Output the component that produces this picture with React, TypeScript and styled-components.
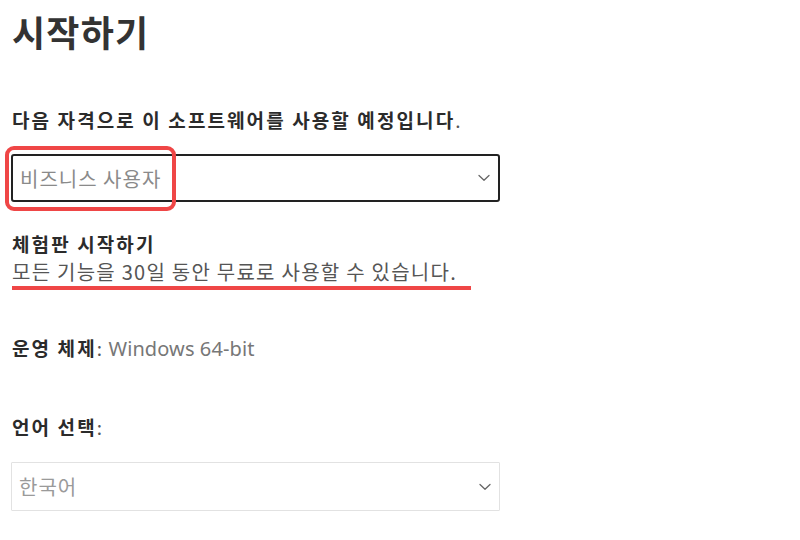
import React from "react";
import styled, { createGlobalStyle } from "styled-components";

const Global = createGlobalStyle`
  html, body { margin: 0; padding: 0; background: #fff; }
  body { font-family: "Noto Sans", "Noto Sans CJK KR", sans-serif; }
`;

const Page = styled.div`
  padding: 11px 0 0 11px;
  width: 489px;
  display: flex;
  flex-direction: column;
`;

const Title = styled.h1`
  margin: 0 0 0 1px;
  font-family: "Noto Sans CJK KR", sans-serif;
  font-size: 36px;
  letter-spacing: 1.2px;
  line-height: 40px;
  font-weight: 700;
  color: #333;
`;

const Label = styled.div<{ $mt: number }>`
  margin-top: ${(p) => p.$mt}px;
  margin-left: 1px;
  font-family: "Noto Sans CJK KR", sans-serif;
  font-size: 19px;
  letter-spacing: 2.1px;
  line-height: 26px;
  font-weight: 700;
  color: #2b2b2b;
`;

const Punct = styled.span`
  font-weight: 400;
  color: #555;
  letter-spacing: 0;
`;

const Value = styled.span`
  font-family: "Noto Sans", "Noto Sans CJK KR", sans-serif;
  font-weight: 400;
  font-size: 20px;
  color: #777;
  letter-spacing: 0.1px;
`;

const SelectWrap = styled.div<{ $mt: number }>`
  position: relative;
  margin-top: ${(p) => p.$mt}px;
`;

const SelectBox = styled.div<{ $strong?: boolean }>`
  box-sizing: border-box;
  height: ${(p) => (p.$strong ? 48 : 49)}px;
  width: 489px;
  display: flex;
  align-items: center;
  justify-content: space-between;
  padding: 0 7px 0 7px;
  border: ${(p) => (p.$strong ? "2px solid #222" : "1px solid #e2e2e2")};
  border-radius: ${(p) => (p.$strong ? 3 : 1)}px;
  background: #fff;
`;

const SelectText = styled.span<{ $light?: boolean }>`
  font-family: "Noto Sans CJK KR", sans-serif;
  font-size: 20px;
  color: ${(p) => (p.$light ? "#9a9a9a" : "#8a8a8a")};
  letter-spacing: 1px;
`;

const Highlight = styled.div`
  position: absolute;
  left: -6px;
  top: -8px;
  width: 171px;
  height: 65px;
  box-sizing: border-box;
  border: 4px solid #ef4646;
  border-radius: 9px;
  pointer-events: none;
`;

const Desc = styled.div`
  margin-left: 1px;
  margin-top: 1px;
  line-height: 28px;
`;

const Underlined = styled.span`
  display: inline-block;
  font-family: "Noto Sans CJK KR", sans-serif;
  font-size: 20px;
  letter-spacing: 1.25px;
  color: #555;
  padding-right: 14px;
  border-bottom: 4px solid #ef4646;
  line-height: 28px;
`;

const Chevron = () => (
  <svg width="14" height="8" viewBox="0 0 14 8" fill="none">
    <path d="M2 1.5 L7 6.2 L12 1.5" stroke="#666" strokeWidth="1.3" strokeLinecap="round" strokeLinejoin="round" />
  </svg>
);

export default function App() {
  return (
    <>
      <Global />
      <Page>
        <Title>시작하기</Title>
        <Label $mt={56}>
          다음 자격으로 이 소프트웨어를 사용할 예정입니다<Punct>.</Punct>
        </Label>
        <SelectWrap $mt={21}>
          <SelectBox $strong>
            <SelectText>비즈니스 사용자</SelectText>
            <Chevron />
          </SelectBox>
          <Highlight />
        </SelectWrap>
        <Label $mt={29}>체험판 시작하기</Label>
        <Desc>
          <Underlined>모든 기능을 30일 동안 무료로 사용할 수 있습니다.</Underlined>
        </Desc>
        <Label $mt={45}>
          운영 체제<Punct>:</Punct> <Value>Windows 64-bit</Value>
        </Label>
        <Label $mt={52}>
          언어 선택<Punct>:</Punct>
        </Label>
        <SelectWrap $mt={22}>
          <SelectBox>
            <SelectText $light>한국어</SelectText>
            <Chevron />
          </SelectBox>
        </SelectWrap>
      </Page>
    </>
  );
}
